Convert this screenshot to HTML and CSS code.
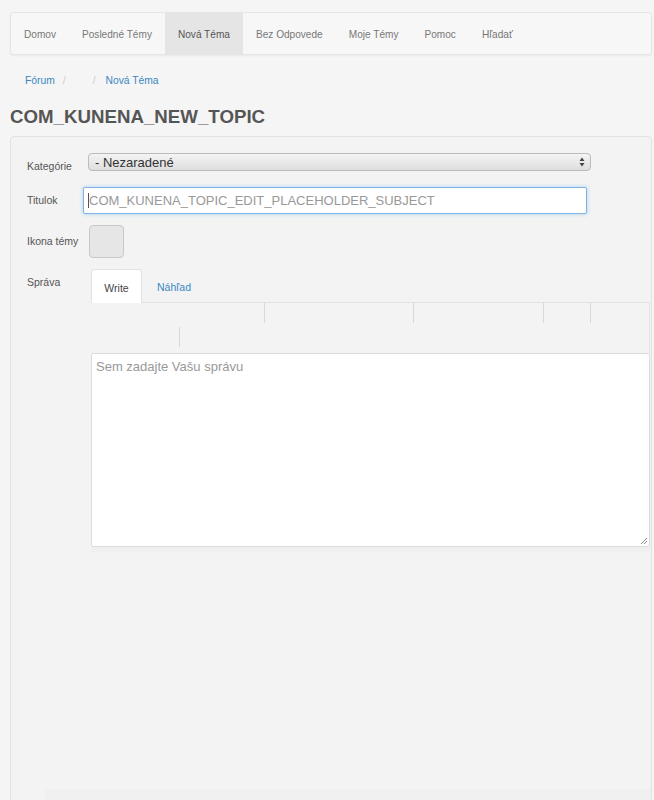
FILE: index.html
```html
<!DOCTYPE html>
<html lang="sk">
<head>
<meta charset="utf-8">
<title>Nová Téma</title>
<link rel="stylesheet" href="styles.css">
</head>
<body>
<nav class="navbar">
  <a class="nav-item">Domov</a>
  <a class="nav-item">Posledné Témy</a>
  <a class="nav-item active">Nová Téma</a>
  <a class="nav-item">Bez Odpovede</a>
  <a class="nav-item">Moje Témy</a>
  <a class="nav-item">Pomoc</a>
  <a class="nav-item">Hľadať</a>
</nav>
<div class="breadcrumb">
  <a class="crumb">Fórum</a><span class="sep">/</span><span class="crumb-empty"></span><span class="sep">/</span><a class="crumb">Nová Téma</a>
</div>
<h1 class="title">COM_KUNENA_NEW_TOPIC</h1>
<div class="panel">
  <div class="row row-cat">
    <label class="lbl">Kategórie</label>
    <div class="select"><span>- Nezaradené</span><svg class="arrows" width="6" height="10" viewBox="0 0 6 10"><path d="M3 0.5 L5.5 4 L0.5 4 Z M3 9.5 L5.5 6 L0.5 6 Z" fill="#444"/></svg></div>
  </div>
  <div class="row row-title">
    <label class="lbl">Titulok</label>
    <div class="input"><span class="caret"></span>COM_KUNENA_TOPIC_EDIT_PLACEHOLDER_SUBJECT</div>
  </div>
  <div class="row row-icon">
    <label class="lbl">Ikona témy</label>
    <div class="iconbox"></div>
  </div>
  <div class="row row-msg">
    <label class="lbl">Správa</label>
    <div class="editor">
      <div class="tabs">
        <div class="tab active">Write</div>
        <div class="tab link">Náhľad</div>
        <div class="tabs-fill"></div>
      </div>
      <div class="toolbar">
        <div class="tb-row tb-row1">
          <span class="tb-sep s1"></span>
          <span class="tb-sep s2"></span>
          <span class="tb-sep s3"></span>
          <span class="tb-sep s4"></span>
        </div>
        <div class="tb-row tb-row2">
          <span class="tb-sep s5"></span>
        </div>
      </div>
      <div class="textarea">Sem zadajte Vašu správu
        <svg class="grip" width="8" height="8" viewBox="0 0 8 8"><path d="M7 1 L1 7 M7 4 L4 7" stroke="#888" stroke-width="1"/></svg>
      </div>
      <div class="under"></div>
    </div>
  </div>
  <div class="bottom-strip"></div>
</div>
</body>
</html>
```
FILE: styles.css
```css
* { box-sizing: border-box; }
html, body { margin: 0; padding: 0; }
body {
  background: #f5f5f5;
  font-family: "Liberation Sans", Arial, sans-serif;
  color: #555;
  width: 654px;
  height: 800px;
  overflow: hidden;
}
.navbar {
  display: flex;
  margin: 12px 2px 0 10px;
  height: 43px;
  background: #f7f7f7;
  border: 1px solid #e6e6e6;
  border-radius: 3px;
  box-shadow: 0 1px 2px rgba(0,0,0,0.05);
}
.nav-item {
  display: flex;
  align-items: center;
  padding: 1px 13px 0 13px;
  font-size: 10.1px;
  color: #777;
}
.nav-item.active {
  background: #e5e5e5;
  color: #555;
}
.breadcrumb {
  display: flex;
  align-items: center;
  margin: 18px 0 0 25px;
  height: 14px;
  font-size: 10.3px;
}
.crumb { color: #3a87c2; }
.sep { color: #ccc; margin: 0 10px 0 8px; }
.crumb-empty { width: 9px; }
.title {
  margin: 18px 0 0 10px;
  font-size: 18.7px;
  font-weight: bold;
  color: #555;
  line-height: 23px;
}
.panel {
  margin: 8px 2px 0 10px;
  height: 700px;
  background: #f3f3f3;
  border: 1px solid #e2e2e2;
  border-radius: 4px;
  padding: 16px 0 0 16px;
  position: relative;
}
.row { display: flex; }
.lbl {
  width: 56px;
  font-size: 10.5px;
  color: #555;
  flex: none;
}
.row-cat { height: 18px; }
.row-cat .lbl { padding-top: 7px; }
.select {
  margin-left: 5px;
  width: 503px;
  height: 18px;
  border: 1px solid #bbb;
  border-radius: 4px;
  background: linear-gradient(#f4f4f4, #dedede);
  display: flex;
  justify-content: space-between;
  align-items: center;
  padding: 0 5px 0 6px;
  font-size: 13px;
  color: #333;
}
.arrows { flex: none; }
.row-title { margin-top: 16px; }
.row-title .lbl { padding-top: 7px; }
.input {
  width: 504px;
  height: 27px;
  background: #fff;
  border: 1px solid #7fb3e3;
  border-radius: 2px;
  box-shadow: 0 0 4px rgba(82,168,236,0.45);
  font-size: 13px;
  color: #999;
  display: flex;
  align-items: center;
  padding-left: 4px;
}
.caret {
  width: 1px;
  height: 15px;
  background: #555;
}
.row-icon { margin-top: 11px; }
.row-icon .lbl { padding-top: 10px; }
.iconbox {
  margin-left: 6px;
  width: 35px;
  height: 33px;
  background: #e6e6e6;
  border: 1px solid #c8c8c8;
  border-radius: 4px;
}
.row-msg { margin-top: 11px; }
.row-msg .lbl { padding-top: 7px; }
.editor {
  margin-left: 8px;
  flex: 1;
  margin-right: 1px;
}
.tabs {
  display: flex;
  height: 34px;
}
.tab {
  font-size: 10.5px;
  display: flex;
  align-items: center;
  justify-content: center;
  padding-top: 2px;
}
.tab.active {
  width: 51px;
  background: #fff;
  border: 1px solid #e2e2e2;
  border-bottom: none;
  border-radius: 3px 3px 0 0;
  color: #444;
}
.tab.link {
  width: 64px;
  color: #3a87c2;
  border-bottom: 1px solid #e2e2e2;
}
.tabs-fill {
  flex: 1;
  border-bottom: 1px solid #e2e2e2;
}
.toolbar {
  height: 50px;
  border-right: 1px solid #e4e4e4;
}
.tb-row { position: relative; height: 24px; }
.tb-sep {
  position: absolute;
  top: 0;
  width: 1px;
  height: 20px;
  background: #d8d8d8;
}
.s1 { left: 173px; }
.s2 { left: 322px; }
.s3 { left: 452px; }
.s4 { left: 499px; }
.s5 { left: 88px; }
.textarea {
  position: relative;
  height: 194px;
  background: #fff;
  border: 1px solid #dcdcdc;
  border-radius: 2px;
  font-size: 13px;
  color: #999;
  padding: 5px 4px;
}
.grip {
  position: absolute;
  right: 1px;
  bottom: 1px;
}
.under {
  height: 5px;
  background: #efefef;
}
.bottom-strip {
  position: absolute;
  left: 34px;
  right: 0;
  top: 652px;
  height: 12px;
  background: #f0f0f0;
}
```
